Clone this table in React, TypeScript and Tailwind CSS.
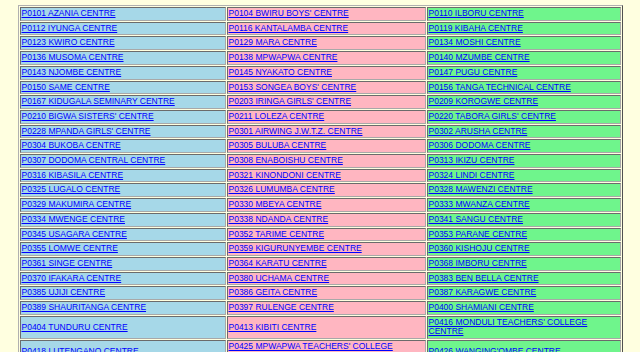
const rows: [string, string, string][] = [
  ["P0101 AZANIA CENTRE", "P0104 BWIRU BOYS' CENTRE", "P0110 ILBORU CENTRE"],
  ["P0112 IYUNGA CENTRE", "P0116 KANTALAMBA CENTRE", "P0119 KIBAHA CENTRE"],
  ["P0123 KWIRO CENTRE", "P0129 MARA CENTRE", "P0134 MOSHI CENTRE"],
  ["P0136 MUSOMA CENTRE", "P0138 MPWAPWA CENTRE", "P0140 MZUMBE CENTRE"],
  ["P0143 NJOMBE CENTRE", "P0145 NYAKATO CENTRE", "P0147 PUGU CENTRE"],
  ["P0150 SAME CENTRE", "P0153 SONGEA BOYS' CENTRE", "P0156 TANGA TECHNICAL CENTRE"],
  ["P0167 KIDUGALA SEMINARY CENTRE", "P0203 IRINGA GIRLS' CENTRE", "P0209 KOROGWE CENTRE"],
  ["P0210 BIGWA SISTERS' CENTRE", "P0211 LOLEZA CENTRE", "P0220 TABORA GIRLS' CENTRE"],
  ["P0228 MPANDA GIRLS' CENTRE", "P0301 AIRWING J.W.T.Z. CENTRE", "P0302 ARUSHA CENTRE"],
  ["P0304 BUKOBA CENTRE", "P0305 BULUBA CENTRE", "P0306 DODOMA CENTRE"],
  ["P0307 DODOMA CENTRAL CENTRE", "P0308 ENABOISHU CENTRE", "P0313 IKIZU CENTRE"],
  ["P0316 KIBASILA CENTRE", "P0321 KINONDONI CENTRE", "P0324 LINDI CENTRE"],
  ["P0325 LUGALO CENTRE", "P0326 LUMUMBA CENTRE", "P0328 MAWENZI CENTRE"],
  ["P0329 MAKUMIRA CENTRE", "P0330 MBEYA CENTRE", "P0333 MWANZA CENTRE"],
  ["P0334 MWENGE CENTRE", "P0338 NDANDA CENTRE", "P0341 SANGU CENTRE"],
  ["P0345 USAGARA CENTRE", "P0352 TARIME CENTRE", "P0353 PARANE CENTRE"],
  ["P0355 LOMWE CENTRE", "P0359 KIGURUNYEMBE CENTRE", "P0360 KISHOJU CENTRE"],
  ["P0361 SINGE CENTRE", "P0364 KARATU CENTRE", "P0368 IMBORU CENTRE"],
  ["P0370 IFAKARA CENTRE", "P0380 UCHAMA CENTRE", "P0383 BEN BELLA CENTRE"],
  ["P0385 UJIJI CENTRE", "P0386 GEITA CENTRE", "P0387 KARAGWE CENTRE"],
  ["P0389 SHAURITANGA CENTRE", "P0397 RULENGE CENTRE", "P0400 SHAMIANI CENTRE"],
  ["P0404 TUNDURU CENTRE", "P0413 KIBITI CENTRE", "P0416 MONDULI TEACHERS' COLLEGE CENTRE"],
  ["P0418 LUTENGANO CENTRE", "P0425 MPWAPWA TEACHERS' COLLEGE CENTRE", "P0426 WANGING'OMBE CENTRE"],
];

const cell =
  "border border-t-[#6b6b6b] border-l-[#6b6b6b] border-b-[#a8a8a8] border-r-[#a8a8a8] px-px py-px text-left align-middle";

function Centre({ name }: { name: string }) {
  return (
    <a href="#" className="text-[#0000ff] underline">
      {name}
    </a>
  );
}

export default function App() {
  return (
    <div className="min-h-screen bg-[#ffffe0] pt-[5px] font-['Liberation_Sans',Arial,sans-serif] text-[8.5px] leading-[9.7px]">
      <table className="mx-auto border-separate border-spacing-[1px] border border-t-[#b0b0b0] border-l-[#b0b0b0] border-b-[#505050] border-r-[#505050]">
        <tbody>
          {rows.map((r) => (
            <tr key={r[0]}>
              <td className={`${cell} w-[206px] bg-[#a6d8e8]`}>
                <Centre name={r[0]} />
              </td>
              <td className={`${cell} w-[199px] bg-[#ffb6c1]`}>
                <Centre name={r[1]} />
              </td>
              <td className={`${cell} w-[194px] bg-[#6ff58c]`}>
                <Centre name={r[2]} />
              </td>
            </tr>
          ))}
        </tbody>
      </table>
    </div>
  );
}
